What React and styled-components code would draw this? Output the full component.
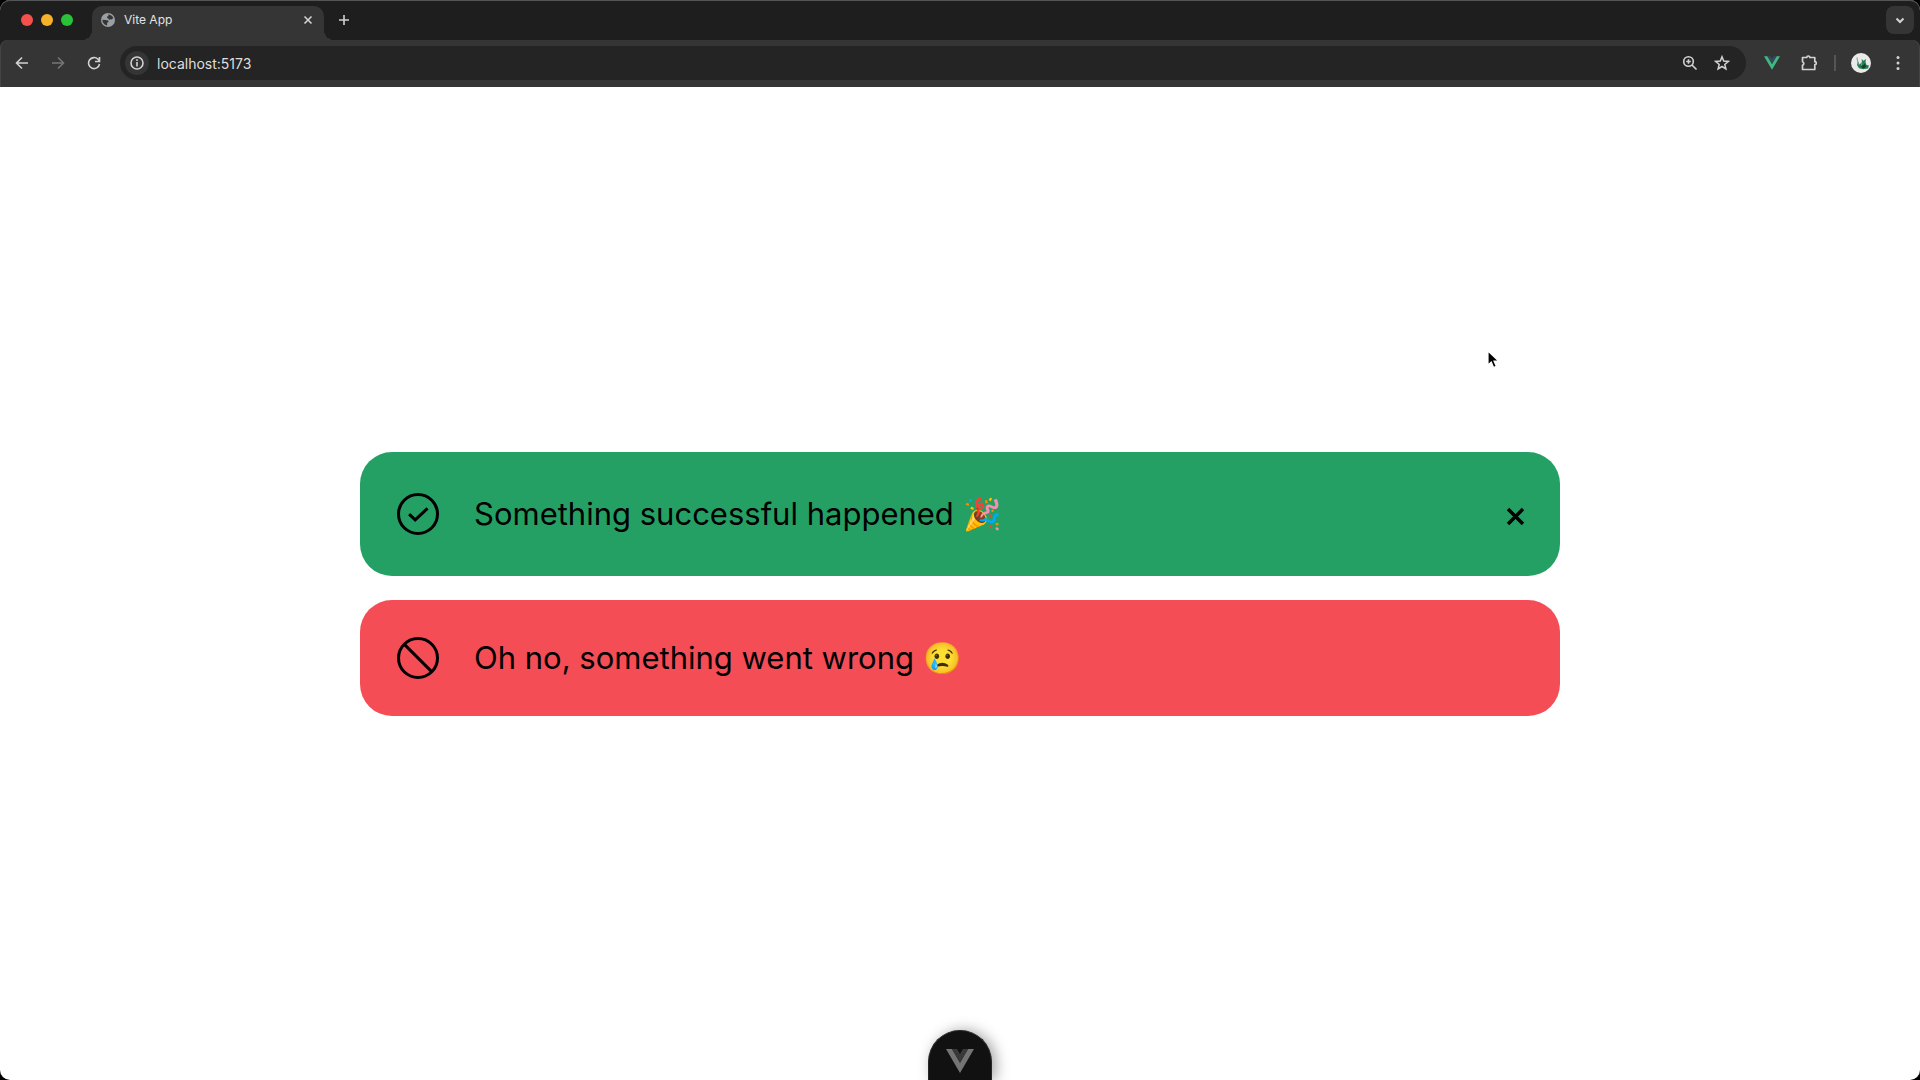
import React from "react";
import styled, { createGlobalStyle } from "styled-components";

const GlobalStyle = createGlobalStyle`
  *, *::before, *::after { box-sizing: border-box; }
  body {
    margin: 0;
    background: #000;
    font-family: Inter, "Liberation Sans", sans-serif;
    -webkit-font-smoothing: antialiased;
  }
  button, input { font: inherit; color: inherit; }
`;

const Window = styled.div`
  display: flex;
  flex-direction: column;
  min-height: 100vh;
  overflow: hidden;
  border-radius: 10px;
  background: #fff;
`;

const Chrome = styled.header`
  background: #1e1e1e;
  color: #e3e3e3;
`;

const TabStrip = styled.div`
  display: flex;
  align-items: center;
  height: 40px;
  padding: 0 6px 0 21px;
  border-radius: 10px 10px 0 0;
  box-shadow: inset 0 1px 0 #555;
`;

const Lights = styled.div`
  display: flex;
  gap: 8px;
  margin-right: 19px;
`;

const Light = styled.button`
  width: 12px;
  height: 12px;
  padding: 0;
  border: 0;
  border-radius: 50%;
  background: ${(p) => p.$color};
`;

const Tab = styled.div`
  position: relative;
  display: flex;
  align-items: center;
  align-self: flex-end;
  width: 232px;
  height: 34px;
  padding: 0 8px 6px 9px;
  border-radius: 10px 10px 0 0;
  background: #353535;
  font-size: 12px;

  &::before, &::after {
    content: "";
    position: absolute;
    bottom: 0;
    width: 10px;
    height: 10px;
  }
  &::before {
    right: 100%;
    background: radial-gradient(circle at 0 0, transparent 10px, #353535 10px);
  }
  &::after {
    left: 100%;
    background: radial-gradient(circle at 100% 0, transparent 10px, #353535 10px);
  }
`;

const TabTitle = styled.span`
  flex: 1;
  margin-left: 9px;
  line-height: 16px;
`;

const IconButton = styled.button`
  display: grid;
  place-items: center;
  flex: none;
  width: ${(p) => p.$size || 28}px;
  height: ${(p) => p.$size || 28}px;
  padding: 0;
  border: 0;
  border-radius: ${(p) => (p.$filled ? 8 : 14)}px;
  background: ${(p) => (p.$filled ? "#353535" : "transparent")};
  color: ${(p) => (p.$dim ? "#757575" : "#d2d2d2")};
`;

const NewTab = styled(IconButton)`
  margin: 0 auto 0 6px;
`;

const Toolbar = styled.div`
  display: flex;
  align-items: center;
  height: 47px;
  padding: 0 8px 1px;
  border-radius: 8px 8px 0 0;
  background: #353535;
  box-shadow: inset 1px 0 0 #444, inset -1px 0 0 #444;
`;

const NavButtons = styled.nav`
  display: flex;
  gap: 8px;
`;

const AddressBar = styled.form`
  display: flex;
  flex: 1;
  align-items: center;
  height: 34px;
  margin: 0 12px;
  padding: 0 10px 0 5px;
  border-radius: 17px;
  background: #242424;
`;

const SiteInfo = styled(IconButton)`
  border-radius: 50%;
  background: #353535;
`;

const UrlInput = styled.input`
  flex: 1;
  min-width: 0;
  height: 24px;
  margin-left: 8px;
  padding: 0;
  border: 0;
  outline: 0;
  background: none;
  color: #dedede;
  font-size: 14px;
`;

const BarIcons = styled.div`
  display: flex;
  gap: 4px;
`;

const Actions = styled.div`
  display: flex;
  align-items: center;
  gap: 9px;
`;

const Divider = styled.span`
  width: 2px;
  height: 16px;
  margin: 0 2px;
  background: #555;
`;

const Page = styled.main`
  display: flex;
  flex: 1;
  flex-direction: column;
  justify-content: center;
  gap: 24px;
  width: 100%;
  max-width: 1200px;
  margin: 0 auto;
`;

const Alert = styled.section`
  display: flex;
  align-items: center;
  gap: 30px;
  padding: 32px;
  border-radius: 32px;
  background: ${(p) => p.$color};
  color: #000;
`;

const Message = styled.p`
  flex: 1;
  margin: 0;
  font-size: 31px;
  line-height: 52px;
`;

const Close = styled.button`
  display: grid;
  place-items: center;
  width: 26px;
  height: 60px;
  padding: 0;
  border: 0;
  background: none;
`;

const DevtoolsButton = styled.button`
  position: fixed;
  bottom: 0;
  left: 50%;
  width: 64px;
  height: 50px;
  margin-left: -32px;
  padding: 14px 0 0;
  border: 1px solid #292929;
  border-bottom: 0;
  border-radius: 32px 32px 0 0;
  background: #111;
  box-shadow: 4px 0 14px rgba(0, 0, 0, 0.35);
`;

const Pointer = styled.svg`
  position: fixed;
  top: 350px;
  left: calc(50% + 527px);
  pointer-events: none;
`;

const Line = ({ size = 16, width = 2, children }) => (
  <svg width={size} height={size} viewBox={`0 0 ${size} ${size}`} fill="none" stroke="currentColor" strokeWidth={width} aria-hidden="true">
    {children}
  </svg>
);

const Globe = () => (
  <svg width="14" height="14" viewBox="0 0 14 14" aria-hidden="true">
    <circle cx="7" cy="7" r="7" fill="#9aa0a3" />
    <path d="M7 1.400c2.500 0 4.500 1.400 5.200 3.400L11 6.500 9.200 6.200 8 7 7.500 5.500 6 5l.2-1.600L7.600 3zM1.400 6.800l3.200.2 2.600.6.4 1.700-1.600.5.200 2.700C3.400 12.200 1.400 9.800 1.400 6.800z" fill="#353535" />
  </svg>
);

const VueMark = ({ size, outer, inner }) => (
  <svg width={size} height={size} viewBox="0 0 28 28" aria-hidden="true">
    <path d="M0 2h6l8 13.800L22 2h6L14 26z" fill={outer} />
    <path d="M6 2h5l3 5 3-5h5l-8 13.800z" fill={inner} />
  </svg>
);

const Avatar = () => (
  <svg width="20" height="20" viewBox="0 0 20 20" aria-hidden="true">
    <circle cx="10" cy="10" r="10" fill="#e9ebe9" />
    <path d="M7 8l1.500 3.500L11 9l-.5-3 2 1.800L15 6l-.5 3 1 3 2.500.5-1 3-5 .8-4-1L6 12z" fill="#2a7a53" />
    <path d="M9 12l3 .5 2-2 1 3.500-3 1.500z" fill="#123e2c" />
    <path d="M6 4.500l.5 4L8 12M11 10l-1 3" stroke="#63a983" fill="none" />
  </svg>
);

const StatusIcon = ({ children }) => (
  <svg width="52" height="52" viewBox="0 0 24 24" fill="none" stroke="currentColor" strokeWidth="1.400" aria-hidden="true">
    <circle cx="12" cy="12" r="9" />
    {children}
  </svg>
);

export default function App() {
  return (
    <>
      <GlobalStyle />
      <Window>
        <Chrome>
          <TabStrip>
            <Lights>
              <Light $color="#f4514c" aria-label="Close window" />
              <Light $color="#f6b32a" aria-label="Minimise window" />
              <Light $color="#29c238" aria-label="Zoom window" />
            </Lights>
            <Tab>
              <Globe />
              <TabTitle>Vite App</TabTitle>
              <IconButton $size={16} aria-label="Close tab">
                <Line size={10} width={1.6}><path d="M1.500 1.500l7 7M8.500 1.500l-7 7" /></Line>
              </IconButton>
            </Tab>
            <NewTab aria-label="New tab">
              <Line size={12} width={1.6}><path d="M6 1v10M1 6h10" /></Line>
            </NewTab>
            <IconButton $filled aria-label="Search tabs">
              <Line size={10}><path d="M1.500 3.500L5 7l3.500-3.500" /></Line>
            </IconButton>
          </TabStrip>
          <Toolbar>
            <NavButtons aria-label="History">
              <IconButton aria-label="Back">
                <Line size={14} width={1.6}><path d="M13 7H2M7 1.500L1.500 7 7 12.500" /></Line>
              </IconButton>
              <IconButton $dim aria-label="Forward">
                <Line size={14} width={1.6}><path d="M1 7h11M7 1.500L12.500 7 7 12.500" /></Line>
              </IconButton>
              <IconButton aria-label="Reload">
                <Line size={14} width={1.6}><path d="M12.500 8A5.500 5.500 0 1 1 11 3.200L12.500 4.600M12.500 1v4.500H8" /></Line>
              </IconButton>
            </NavButtons>
            <AddressBar onSubmit={(e) => e.preventDefault()}>
              <SiteInfo $size={24} type="button" aria-label="Site information">
                <Line size={14} width={1.6}><circle cx="7" cy="7" r="6" /><path d="M7 6v4.500M7 3.300v1.600" /></Line>
              </SiteInfo>
              <UrlInput aria-label="Address" defaultValue="localhost:5173" />
              <BarIcons>
                <IconButton type="button" aria-label="Page zoom">
                  <Line size={16} width={1.6}><circle cx="6.500" cy="6.500" r="4.800" /><path d="M10 10l4.500 4.500M6.500 4.200v4.600M4.200 6.500h4.600" /></Line>
                </IconButton>
                <IconButton type="button" aria-label="Bookmark">
                  <Line size={16} width={1.5}><path d="M8 1.800l1.700 4.200 4.600.4-3.500 3 1.100 4.500L8 11.500l-3.900 2.400 1.100-4.500-3.500-3 4.600-.4z" /></Line>
                </IconButton>
              </BarIcons>
            </AddressBar>
            <Actions>
              <IconButton aria-label="Vue devtools">
                <VueMark size={16} outer="#41b883" inner="#34495e" />
              </IconButton>
              <IconButton aria-label="Extensions">
                <Line size={18} width={1.7}><path d="M2.500 3.500h4.300a1.500 1.500 0 0 1 3 0h5v4.200a1.500 1.500 0 0 1 0 3v4.800H2.500v-4.200a1.900 1.900 0 0 0 0-3.600z" strokeLinejoin="round" /></Line>
              </IconButton>
              <Divider />
              <IconButton aria-label="Profile"><Avatar /></IconButton>
              <IconButton aria-label="Browser menu">
                <svg width="4" height="16" viewBox="0 0 4 16" fill="currentColor" aria-hidden="true">
                  <circle cx="2" cy="2.500" r="1.500" /><circle cx="2" cy="8" r="1.500" /><circle cx="2" cy="13.500" r="1.500" />
                </svg>
              </IconButton>
            </Actions>
          </Toolbar>
        </Chrome>
        <Page>
          <Alert $color="#25a065">
            <StatusIcon><path d="M7.900 12.100l2.800 2.600 5.700-5.300" /></StatusIcon>
            <Message>Something successful happened 🎉</Message>
            <Close aria-label="Dismiss">
              <svg width="20" height="24" viewBox="0 0 20 24" fill="none" stroke="#000" strokeWidth="3.500" aria-hidden="true">
                <path d="M3 7l15 15M18 7L3 22" />
              </svg>
            </Close>
          </Alert>
          <Alert $color="#f54d56">
            <StatusIcon><path d="M5.600 5.600l12.800 12.800" /></StatusIcon>
            <Message>Oh no, something went wrong 😢</Message>
          </Alert>
        </Page>
        <DevtoolsButton aria-label="Open devtools">
          <VueMark size={28} outer="#747474" inner="#3a3a3a" />
        </DevtoolsButton>
        <Pointer width="14" height="20" viewBox="0 0 14 20" aria-hidden="true">
          <path d="M1 1v14l3.300-3 2.300 5.500 2.700-1.200L7 11h4.600z" fill="#000" stroke="#fff" strokeWidth="1.200" />
        </Pointer>
      </Window>
    </>
  );
}
